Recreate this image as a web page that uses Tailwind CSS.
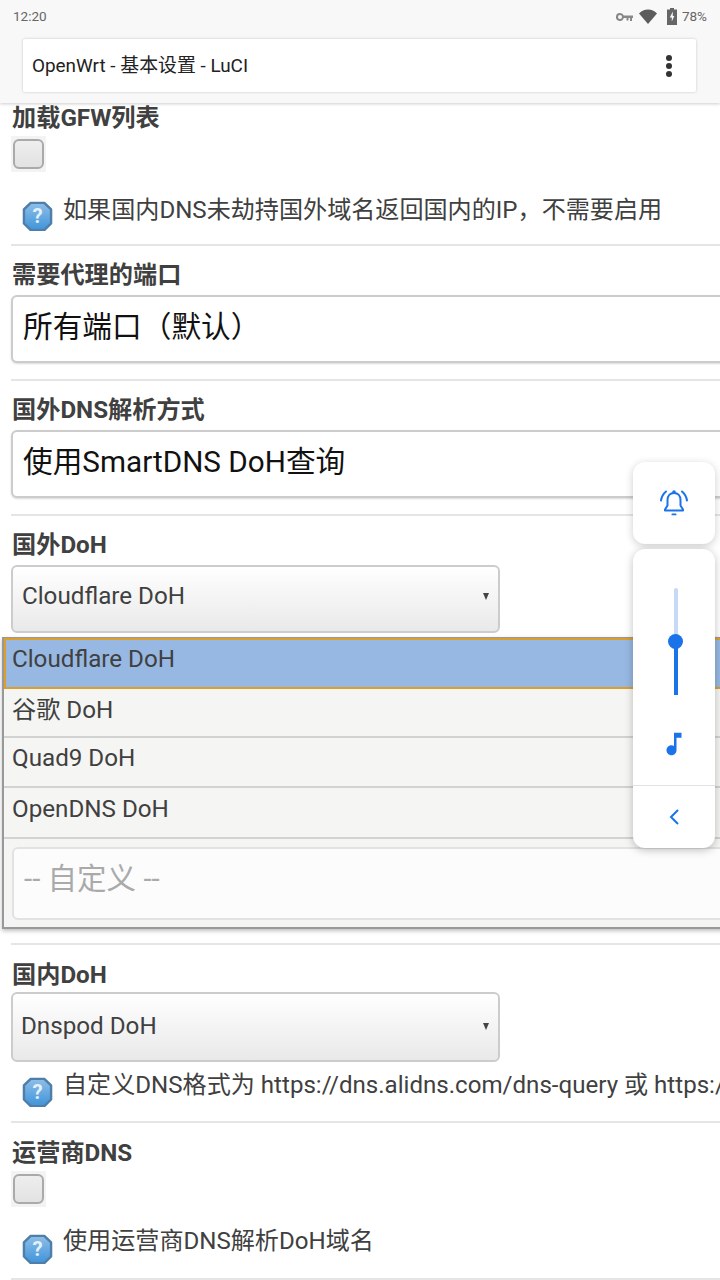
<!DOCTYPE html>
<html lang="zh-CN">
<head>
    <meta charset="UTF-8">
    <meta name="viewport" content="width=device-width, initial-scale=1.0">
    <title>OpenWrt - 基本设置 - LuCI</title>
    <script src="https://cdn.jsdelivr.net/npm/@tailwindcss/browser@4"></script>
</head>

<body class="bg-white font-[Roboto,'Noto_Sans_CJK_SC',sans-serif] text-[#404040]">
<div class="relative w-[720px] h-[1280px] overflow-hidden">
    <!-- Browser chrome -->
    <header class="relative z-10 h-[103px] bg-[#f8f8f8] shadow-[0_1px_3px_rgba(0,0,0,0.2)]">
        <div class="flex items-center justify-between h-[33px] pl-[13px] pr-[13px] text-[13.5px] text-[#666]">
            <span>12:20</span>
            <div class="flex items-center">
                <svg class="w-[17px] h-[8px] mr-[6px]" viewBox="0 0 17 8" fill="#888"><path d="M4 0a4 4 0 0 1 3.800 2.500H17V5h-1v3h-2V5h-1.500v2.500h-2V5H7.800A4 4 0 1 1 4 0zm0 2a2 2 0 1 0 0 4 2 2 0 0 0 0-4z" fill-rule="evenodd"/></svg>
                <svg class="w-[18px] h-[15px] mr-[10px]" viewBox="0 0 18 15"><path d="M0 4.500C2.500 1.800 5.500.5 9 .5s6.500 1.300 9 4L9 15z" fill="#5c5c5c"/></svg>
                <svg class="w-[10px] h-[17px] mr-[5px]" viewBox="0 0 10 17"><path d="M3 0h4v1.500h3V17H0V1.500h3z" fill="#666"/><path d="M5.800 3.500 2.800 9.500h2v4l2.500-5.500h-1.500z" fill="#f8f8f8"/></svg>
                <span>78%</span>
            </div>
        </div>
        <div class="flex items-center justify-between mt-[6px] ml-[23px] w-[673px] h-[53px] pl-[9px] pr-[24px] bg-white rounded-[2px] shadow-[0_0_3px_rgba(0,0,0,0.2)]">
            <span class="pt-[2px] text-[18.9px] text-[#222]">OpenWrt - 基本设置 - LuCI</span>
            <div class="flex flex-col gap-[2px]">
                <i class="block w-[6px] h-[6px] rounded-full bg-[#333]"></i>
                <i class="block w-[6px] h-[6px] rounded-full bg-[#333]"></i>
                <i class="block w-[6px] h-[6px] rounded-full bg-[#333]"></i>
            </div>
        </div>
    </header>

    <!-- Form -->
    <main class="ml-[11px]">
        <section class="h-[143px] border-b-2 border-[#e5e5e5] pt-[1px]">
            <h3 class="text-[24.2px] leading-[28px] font-bold pl-[1px]">加载GFW列表</h3>
            <div class="mt-[4px] w-[35px] h-[36px] bg-[#f3f3f3] flex items-center justify-center">
                <span class="block w-[31px] h-[30px] rounded-[6px] border-2 border-[#aaa] bg-gradient-to-b from-[#eeeeee] to-[#e2e2e2]"></span>
            </div>
            <div class="flex mt-[22px] ml-[11px]">
                <svg class="w-[31px] h-[30px] mt-[7px] mr-[10px] shrink-0" viewBox="0 0 32 32" preserveAspectRatio="none"><defs><linearGradient id="help" x1="0" y1="0" x2="0" y2="1"><stop offset="0" stop-color="#8fbfe8"/><stop offset="1" stop-color="#3f94da"/></linearGradient></defs><path d="M9 2h14l7 7v15l-7 7H9l-7-7V9z" fill="url(#help)" stroke="#4f7ea8" stroke-width="2.500" stroke-linejoin="round"/><text x="16" y="24" text-anchor="middle" font-size="21" font-weight="700" fill="#e4f0fa">?</text></svg>
                <p class="text-[24.1px] leading-[32px] whitespace-nowrap">如果国内DNS未劫持国外域名返回国内的IP，不需要启用</p>
            </div>
        </section>

        <section class="h-[135px] border-b-2 border-[#e5e5e5] pt-[15px]">
            <h3 class="text-[24.2px] leading-[28px] font-bold pl-[1px]">需要代理的端口</h3>
            <div class="mt-[6px] w-[760px] h-[68px] rounded-[6px] border-2 border-[#ccc] bg-white shadow-[0_1px_2px_rgba(0,0,0,0.15)] flex items-center pl-[10px] pb-[4px] text-[29.7px] text-[#111]">所有端口（默认）</div>
        </section>

        <section class="h-[135px] border-b-2 border-[#e5e5e5] pt-[15px]">
            <h3 class="text-[24.2px] leading-[28px] font-bold pl-[1px]">国外DNS解析方式</h3>
            <div class="mt-[6px] w-[760px] h-[68px] rounded-[6px] border-2 border-[#ccc] bg-white shadow-[0_1px_2px_rgba(0,0,0,0.15)] flex items-center pl-[10px] pb-[4px] text-[29.7px] text-[#111]">使用SmartDNS DoH查询</div>
        </section>

        <section class="h-[429px] border-b-2 border-[#e5e5e5] pt-[15px]">
            <h3 class="text-[24.2px] leading-[28px] font-bold pl-[1px]">国外DoH</h3>
            <div class="mt-[6px] w-[489px] h-[68px] rounded-[6px] border-2 border-[#ccc] bg-gradient-to-b from-white to-[#e9e9e9] flex items-center justify-between pl-[9px] pr-[9px] pb-[6px] text-[24.2px]">
                <span>Cloudflare DoH</span>
                <span class="w-0 h-0 border-x-[3.500px] border-x-transparent border-t-[7px] border-t-[#444]"></span>
            </div>
            <!-- Open list -->
            <div class="mt-[4px] -ml-[9px] w-[760px] h-[292px] border-x-2 border-b-2 border-t border-[#999] bg-[#f5f5f3] shadow-[0_2px_4px_rgba(0,0,0,0.25)] text-[24.2px]">
                <div class="h-[51px] pl-[6px] pt-[2px] bg-[#97b8e2] border-2 border-[#dd9f2c] leading-[34px]">Cloudflare DoH</div>
                <div class="h-[49px] pl-[8px] pt-[3px] border-b-2 border-[#d2d2d2] leading-[36px]">谷歌 DoH</div>
                <div class="h-[50px] pl-[8px] pt-[2px] border-b-2 border-[#d2d2d2] leading-[36px]">Quad9 DoH</div>
                <div class="h-[51px] pl-[8px] pt-[3px] border-b-2 border-[#d2d2d2] leading-[36px]">OpenDNS DoH</div>
                <div class="mt-[8px] ml-[8px] w-[740px] h-[73px] rounded-[6px] border-2 border-[#e2e2e2] bg-[#fcfcfc] flex items-center pl-[10px] pb-[9px] text-[29.5px] text-[#aaa]">-- 自定义 --</div>
            </div>
        </section>

        <section class="h-[178px] border-b-2 border-[#e5e5e5] pt-[16px]">
            <h3 class="text-[24.2px] leading-[28px] font-bold pl-[1px]">国内DoH</h3>
            <div class="mt-[3px] w-[489px] h-[70px] rounded-[6px] border-2 border-[#ccc] bg-gradient-to-b from-white to-[#e9e9e9] flex items-center justify-between pl-[8px] pr-[9px] pb-[2px] text-[24.2px]">
                <span>Dnspod DoH</span>
                <span class="w-0 h-0 border-x-[3.500px] border-x-transparent border-t-[7px] border-t-[#444]"></span>
            </div>
            <div class="flex mt-[7px] ml-[11px]">
                <svg class="w-[31px] h-[30px] mt-[8px] mr-[10px] shrink-0" viewBox="0 0 32 32" preserveAspectRatio="none"><path d="M9 2h14l7 7v15l-7 7H9l-7-7V9z" fill="url(#help)" stroke="#4f7ea8" stroke-width="2.500" stroke-linejoin="round"/><text x="16" y="24" text-anchor="middle" font-size="21" font-weight="700" fill="#e4f0fa">?</text></svg>
                <p class="text-[24.1px] leading-[32px] whitespace-nowrap">自定义DNS格式为 https://dns.alidns.com/dns-query 或 https://</p>
            </div>
        </section>

        <section class="h-[157px] border-b-2 border-[#e5e5e5] pt-[16px]">
            <h3 class="text-[24.2px] leading-[28px] font-bold pl-[1px]">运营商DNS</h3>
            <div class="mt-[4px] w-[35px] h-[36px] bg-[#f3f3f3] flex items-center justify-center">
                <span class="block w-[31px] h-[30px] rounded-[6px] border-2 border-[#aaa] bg-gradient-to-b from-[#eeeeee] to-[#e2e2e2]"></span>
            </div>
            <div class="flex mt-[18px] ml-[11px]">
                <svg class="w-[31px] h-[30px] mt-[9px] mr-[10px] shrink-0" viewBox="0 0 32 32" preserveAspectRatio="none"><path d="M9 2h14l7 7v15l-7 7H9l-7-7V9z" fill="url(#help)" stroke="#4f7ea8" stroke-width="2.500" stroke-linejoin="round"/><text x="16" y="24" text-anchor="middle" font-size="21" font-weight="700" fill="#e4f0fa">?</text></svg>
                <p class="text-[24.1px] leading-[32px] whitespace-nowrap">使用运营商DNS解析DoH域名</p>
            </div>
        </section>
    </main>

    <!-- Floating ringer panel -->
    <aside class="absolute z-20 left-[633px] top-[462px] w-[82px]">
        <div class="h-[82px] bg-white rounded-[12px] shadow-[0_2px_8px_rgba(0,0,0,0.2)] flex items-center justify-center">
            <svg class="w-[30px] h-[30px]" viewBox="0 0 30 30" fill="none" stroke="#1a73e8" stroke-width="2" stroke-linecap="round"><path d="M15 5c-4 0-6.500 3-6.500 7v5.500L6 21.500v1h18v-1l-2.500-4V12c0-4-2.500-7-6.500-7z" stroke-linejoin="round"/><circle cx="15" cy="4" r="1.800" fill="#1a73e8" stroke="none"/><rect x="12.500" y="25.500" width="5" height="1.800" rx=".9" fill="#1a73e8" stroke="none"/><path d="M2 12.500C2.500 9 4 6 7 3.500M28 12.500C27.500 9 26 6 23 3.500"/></svg>
        </div>
        <div class="mt-[5px] h-[299px] bg-white rounded-[12px] shadow-[0_2px_8px_rgba(0,0,0,0.25)] flex flex-col items-center">
            <div class="relative mt-[39px] w-[4px] h-[107px] ml-[3px] rounded-full bg-[#c6d9f5]">
                <div class="absolute bottom-0 left-0 w-[4px] h-[53px] bg-[#1a73e8]"></div>
                <div class="absolute top-[46px] -left-[5.5px] w-[15px] h-[15px] rounded-full bg-[#1a73e8]"></div>
            </div>
            <svg class="mt-[34px] w-[30px] h-[30px]" viewBox="0 0 24 24" fill="#1a73e8"><path d="M12 3v10.550c-.59-.34-1.270-.55-2-.55-2.210 0-4 1.790-4 4s1.790 4 4 4 4-1.790 4-4V7h4V3h-6z"/></svg>
            <div class="mt-[26px] w-full flex-1 border-t border-[#e2e2e2] flex items-center justify-center">
                <svg class="w-[14px] h-[18px]" viewBox="0 0 14 18" fill="none" stroke="#1a73e8" stroke-width="2"><path d="M11 2 4 9l7 7"/></svg>
            </div>
        </div>
    </aside>
</div>
</body>
</html>
